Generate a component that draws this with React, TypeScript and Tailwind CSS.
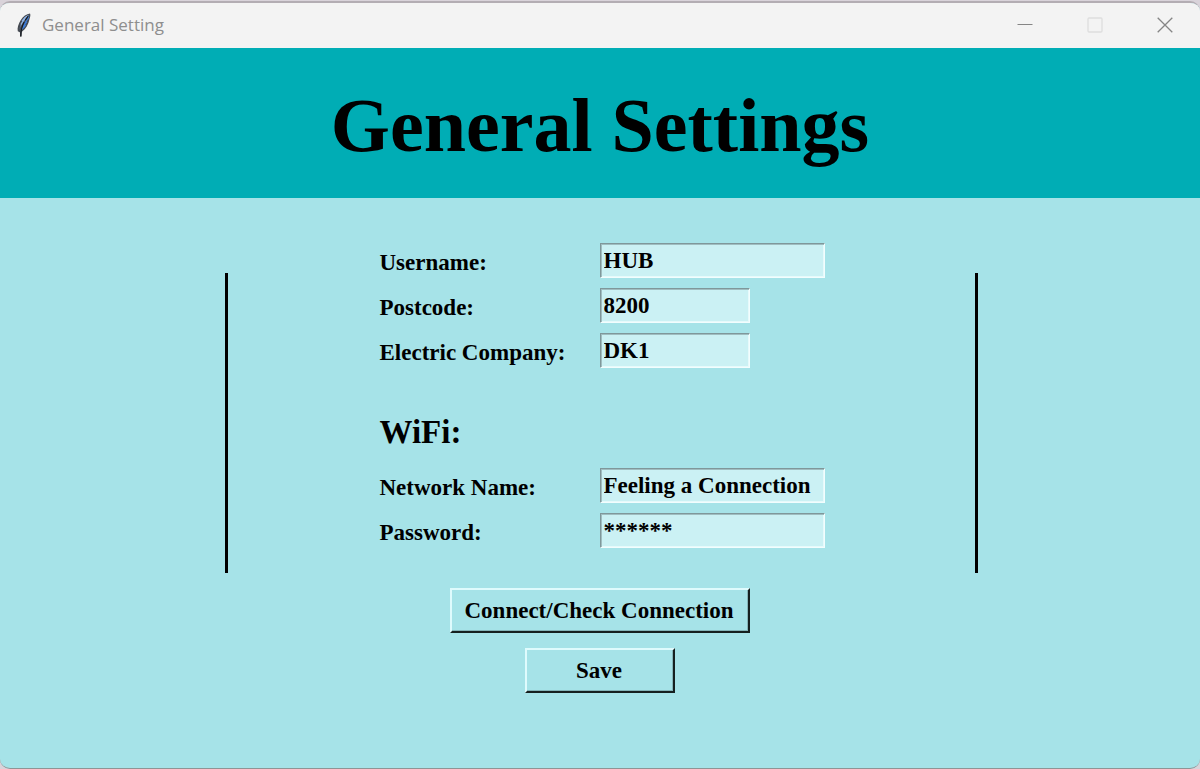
import { useState } from "react";

type FieldProps = {
  id: string;
  label: string;
  initial: string;
  short?: boolean;
};

function Field({ id, label, initial, short }: FieldProps) {
  const [value, setValue] = useState(initial);
  return (
    <div className="grid h-[35px] grid-cols-[221px_1fr] items-start">
      <label htmlFor={id} className="pt-1 pl-px leading-8">
        {label}
      </label>
      <input
        id={id}
        type="text"
        autoComplete="off"
        value={value}
        onChange={(e) => setValue(e.target.value)}
        className={
          (short ? "w-[150px]" : "w-[225px]") +
          " h-[35px] border border-t-[#7f979a] border-l-[#7f979a] border-r-[#f2fdfe] border-b-[#f2fdfe] bg-[#cbf1f4] px-[3px] leading-7 shadow-[inset_1px_1px_0_#9fbdc0,inset_-1px_-1px_0_#e6fafb] outline-none"
        }
      />
    </div>
  );
}

function Feather() {
  return (
    <svg width="16" height="24" viewBox="0 0 16 24" aria-hidden="true">
      <path
        d="M14 .5C10.500 .8 7 3.500 4.800 7 2.300 11 1 15.500 1.800 18.200L3.900 19.200 4.200 23.500 5.600 23.500 5.900 18.800C10 15.800 12.600 10.800 13.400 6.500 14 4 14.900 2 14 .5Z"
        fill="#454a52"
      />
      <path
        d="M13 1.700C9.800 2.500 7.300 5 5.500 8L6.300 7.900 4.200 11.500 5.100 11.300 3 17C4.500 13 8 7 13 1.700Z"
        fill="#8fb3e6"
      />
      <path
        d="M13.300 2.500C10 7 6.800 12 5.500 17.200 8 15.500 9.500 13.600 10.300 11.800L9.200 12 11.400 8.900 10.600 8.800 12.500 6C12.800 4.800 13.300 3.800 13.300 2.500Z"
        fill="#3d7bd6"
      />
      <path
        d="M12 3.300C11 4.800 10 6 9.300 7.200M8.200 9C6.500 12 4.800 16 4.700 23.500"
        fill="none"
        stroke="#15181d"
        strokeWidth="1.100"
      />
    </svg>
  );
}

const buttonClass =
  "h-[45px] border-2 border-t-[#dffbfd] border-l-[#dffbfd] border-r-[#15201f] border-b-[#15201f] pr-[2px] leading-8 shadow-[inset_-1px_-1px_0_#84b5b9]";

export default function App() {
  return (
    <div className="flex min-h-screen flex-col bg-[#d9d3da] pt-px font-['Liberation_Serif',serif]">
      <div className="flex flex-1 flex-col overflow-hidden rounded-[10px] border-t-2 border-b border-t-[#b3adb3] border-b-[#8f9495] bg-[#a6e3e8]">
        <header className="flex h-[45px] items-center justify-between bg-[#f3f3f3] pl-4">
          <div className="flex items-center gap-[10px] pb-[2px] font-['Open_Sans','Noto_Sans',sans-serif] text-[17px] text-[#8e8e8e]">
            <Feather />
            <span>General Setting</span>
          </div>
          <div className="flex h-full text-[#858585]">
            <button type="button" aria-label="Minimize" className="flex w-[70px] items-center justify-center pb-[2px]">
              <svg width="16" height="16" viewBox="0 0 16 16" stroke="currentColor">
                <path d="M.5 7.500H15.500" />
              </svg>
            </button>
            <button
              type="button"
              aria-label="Maximize"
              disabled
              className="flex w-[70px] items-center justify-center pb-[2px] text-[#dedede]"
            >
              <svg width="16" height="16" viewBox="0 0 16 16" fill="none" stroke="currentColor" strokeWidth="1.300">
                <rect x="1" y="1" width="14" height="14" rx="1" />
              </svg>
            </button>
            <button type="button" aria-label="Close" className="flex w-[70px] items-center justify-center pb-[2px]">
              <svg width="16" height="16" viewBox="0 0 16 16" stroke="currentColor" strokeWidth="1.300">
                <path d="M.7.7 15.300 15.300M15.300.7.7 15.300" />
              </svg>
            </button>
          </div>
        </header>

        <div className="flex h-[150px] items-center justify-center bg-[#00adb5] pt-1">
          <h1 className="text-[76px] leading-none font-bold text-black">General Settings</h1>
        </div>

        <main className="flex-1 pt-[45px] pb-[75px]">
          <form
            className="flex flex-col items-center gap-[15px] text-[23px] font-bold text-black"
            onSubmit={(e) => e.preventDefault()}
          >
            <div className="flex w-full max-w-[756px] items-end justify-between pl-[3px]">
              <div className="h-[300px] w-[3px] bg-black" />
              <div className="flex w-[446px] flex-col gap-[10px] pb-[25px]">
                <Field id="username" label="Username:" initial="HUB" />
                <Field id="postcode" label="Postcode:" initial="8200" short />
                <Field id="company" label="Electric Company:" initial="DK1" short />
                <h2 className="flex h-20 items-end pb-[6px] pl-px text-[33px] leading-10">WiFi:</h2>
                <Field id="network" label="Network Name:" initial="Feeling a Connection" />
                <Field id="password" label="Password:" initial="******" />
              </div>
              <div className="h-[300px] w-[3px] bg-black" />
            </div>
            <button type="button" className={buttonClass + " w-[300px]"}>
              Connect/Check Connection
            </button>
            <button type="submit" className={buttonClass + " w-[150px]"}>
              Save
            </button>
          </form>
        </main>
      </div>
    </div>
  );
}
